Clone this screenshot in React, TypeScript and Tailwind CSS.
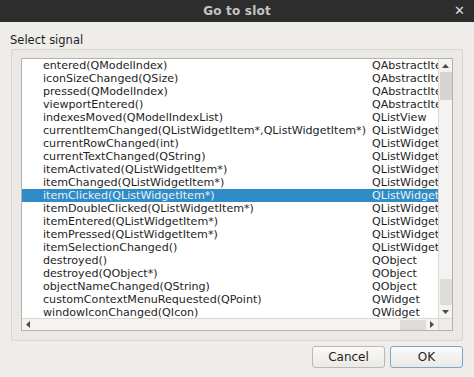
const signals: [string, string][] = [
  ["entered(QModelIndex)", "QAbstractItemView"],
  ["iconSizeChanged(QSize)", "QAbstractItemView"],
  ["pressed(QModelIndex)", "QAbstractItemView"],
  ["viewportEntered()", "QAbstractItemView"],
  ["indexesMoved(QModelIndexList)", "QListView"],
  ["currentItemChanged(QListWidgetItem*,QListWidgetItem*)", "QListWidget"],
  ["currentRowChanged(int)", "QListWidget"],
  ["currentTextChanged(QString)", "QListWidget"],
  ["itemActivated(QListWidgetItem*)", "QListWidget"],
  ["itemChanged(QListWidgetItem*)", "QListWidget"],
  ["itemClicked(QListWidgetItem*)", "QListWidget"],
  ["itemDoubleClicked(QListWidgetItem*)", "QListWidget"],
  ["itemEntered(QListWidgetItem*)", "QListWidget"],
  ["itemPressed(QListWidgetItem*)", "QListWidget"],
  ["itemSelectionChanged()", "QListWidget"],
  ["destroyed()", "QObject"],
  ["destroyed(QObject*)", "QObject"],
  ["objectNameChanged(QString)", "QObject"],
  ["customContextMenuRequested(QPoint)", "QWidget"],
  ["windowIconChanged(QIcon)", "QWidget"],
];

const SELECTED = 10;

function Arrow({ dir }: { dir: "up" | "down" | "left" | "right" }) {
  const pts = {
    up: "0,4 3.5,0 7,4",
    down: "0,0 3.5,4 7,0",
    left: "4,0 0,3.5 4,7",
    right: "0,0 4,3.5 0,7",
  }[dir];
  const vertical = dir === "up" || dir === "down";
  return (
    <svg width={vertical ? 7 : 4} height={vertical ? 4 : 7} viewBox={vertical ? "0 0 7 4" : "0 0 4 7"}>
      <polygon points={pts} fill="#4a4a4a" />
    </svg>
  );
}

export default function App() {
  return (
    <div
      className="w-[474px] h-[377px] flex flex-col bg-[#efedea] text-[#1e1e1e] overflow-hidden"
      style={{ fontFamily: '"DejaVu Sans", Verdana, sans-serif' }}
    >
      {/* title bar */}
      <div className="h-[22px] shrink-0 bg-[#2d2d2d] flex items-center justify-center relative">
        <span className="text-[12px] font-bold text-[#c4c4c4] tracking-[0.2px]">Go to slot</span>
        <span className="absolute right-[9px] top-[3px] text-[13px] font-bold text-[#dcdcdc] leading-[16px]">✕</span>
      </div>

      <div className="flex-1 flex flex-col px-[11px] pt-[11px]">
        <div className="text-[11.5px] leading-[14px] -ml-px">Select signal</div>

        {/* group frame */}
        <div className="mt-[2px] h-[292px] border border-[#d9d5cf] rounded-[2px] bg-[#ebe9e5] px-[9px] pt-[8px]">
          {/* list widget */}
          <div className="w-[432px] h-[273px] border border-[#b7b2ab] bg-white flex flex-col">
            <div className="flex flex-1 min-h-0">
              <div className="flex-1 overflow-hidden">
                {signals.map(([sig, cls], i) => (
                  <div
                    key={i}
                    className={
                      "h-[13px] flex items-center whitespace-nowrap text-[11.1px] leading-[13px] " +
                      (i === SELECTED ? "bg-[#308cc6] text-[#e6f1fa]" : "")
                    }
                  >
                    <span className="w-[350px] shrink-0 pl-[21px] overflow-hidden">{sig}</span>
                    <span className="shrink-0">{cls}</span>
                  </div>
                ))}
              </div>
              {/* vertical scrollbar */}
              <div className="w-[14px] shrink-0 bg-[#f4f3f1] border-l border-[#dcd9d4] flex flex-col items-center">
                <div className="h-[13px] w-full flex items-center justify-center">
                  <Arrow dir="up" />
                </div>
                <div className="h-[28px] w-[12px] bg-[#d6d4d0] rounded-[1px]" />
                <div className="flex-1" />
                <div className="h-[26px] w-[12px] bg-[#dedcd8] rounded-[1px]" />
                <div className="h-[13px] w-full flex items-center justify-center">
                  <Arrow dir="down" />
                </div>
              </div>
            </div>
            {/* horizontal scrollbar */}
            <div className="h-[12px] shrink-0 flex border-t border-[#dcd9d4]">
              <div className="flex-1 bg-[#f4f3f1] flex items-center">
                <div className="w-[12px] flex justify-center">
                  <Arrow dir="left" />
                </div>
                <div className="flex-1" />
                <div className="w-[26px] h-[10px] bg-[#dedcd8] rounded-[1px]" />
                <div className="w-[12px] flex justify-center">
                  <Arrow dir="right" />
                </div>
              </div>
              <div className="w-[14px] shrink-0 bg-[#efedea] border-l border-[#dcd9d4]" />
            </div>
          </div>
        </div>

        {/* buttons */}
        <div className="flex justify-end gap-[5px] mt-[5px]">
          <button className="w-[73px] h-[22px] rounded-[3px] border border-[#bcb8b2] bg-gradient-to-b from-[#fbfaf9] to-[#ebe9e6] text-[12px] text-[#1e1e1e]">
            Cancel
          </button>
          <button className="w-[73px] h-[22px] rounded-[3px] border border-[#7ea6c7] bg-gradient-to-b from-[#fbfaf9] to-[#ebe9e6] text-[12px] text-[#1e1e1e]">
            OK
          </button>
        </div>
      </div>
    </div>
  );
}
